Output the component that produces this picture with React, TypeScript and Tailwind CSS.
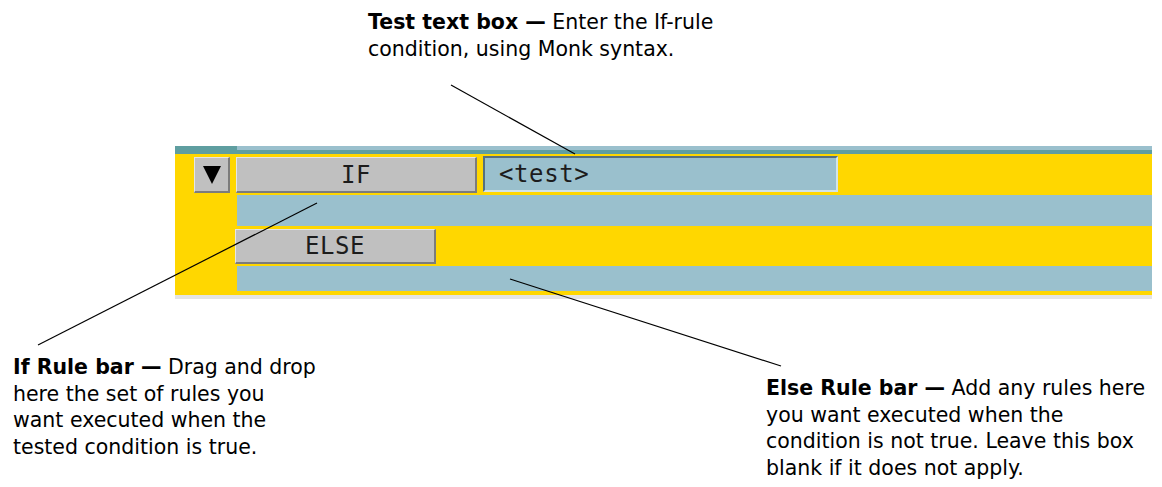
import { ReactNode } from "react";

const SANS = "font-['DejaVu_Sans','Open_Sans',sans-serif]";
const MONO = "font-['DejaVu_Sans_Mono','Liberation_Mono',monospace]";

function Callout({ title, lines, className }: { title: string; lines: ReactNode[]; className?: string }) {
  return (
    <div className={`${SANS} text-[20.5px] leading-[26.7px] text-black whitespace-nowrap ${className ?? ""}`}>
      <span className="font-bold">{title} —</span> {lines[0]}
      {lines.slice(1).map((l, i) => (
        <div key={i}>{l}</div>
      ))}
    </div>
  );
}

function BevelButton({ label, className }: { label: string; className: string }) {
  return (
    <div
      className={`${MONO} ${className} flex items-center justify-center bg-[#c0c0c0] border-t border-l border-t-[#e6e6e6] border-l-[#e6e6e6] border-r-2 border-b-2 border-r-[#7c7c7c] border-b-[#7c7c7c] text-[24px] tracking-[0.6px] text-[#1c1c1c]`}
    >
      {label}
    </div>
  );
}

export default function App() {
  return (
    <div className="relative w-[1162px] h-[487px] bg-white overflow-hidden">
      <Callout
        className="pl-[368px] pt-[9px] h-[61px]"
        title="Test text box"
        lines={["Enter the If-rule", "condition, using Monk syntax."]}
      />

      {/* rule panel */}
      <div className="ml-[175px] mt-[85px] w-[977px] flex flex-col">
        <div className="flex h-[8px]">
          <div className="w-[62px] bg-[#5f9ea0]" />
          <div className="flex-1 flex flex-col">
            <div className="h-[4px] bg-[#9ac0cd]" />
            <div className="h-[4px] bg-[#5f9ea0]" />
          </div>
        </div>
        <div className="bg-[#ffd700] flex flex-col">
          <div className="h-[41px] flex items-start pl-[19px] pt-[3px] gap-[6px]">
            <div className="w-[36px] h-[36px] bg-[#c0c0c0] border-t border-l border-t-[#e6e6e6] border-l-[#e6e6e6] border-r-2 border-b-2 border-r-[#7c7c7c] border-b-[#7c7c7c] flex items-center justify-center">
              <svg width="18" height="18" viewBox="0 0 18 18">
                <polygon points="0,0 18,0 9,18" fill="#000" />
              </svg>
            </div>
            <BevelButton label="IF" className="w-[241px] h-[36px]" />
            <div className={`${MONO} -mt-px w-[355px] h-[36px] bg-[#9ac0cd] border-2 border-t-[#56707c] border-l-[#56707c] border-r-[#d2e4ea] border-b-[#d2e4ea] flex items-center pl-[14px] text-[24px] tracking-[0.6px] text-[#1c1c1c]`}>
              &lt;test&gt;
            </div>
          </div>
          <div className="h-[31px] ml-[62px] bg-[#9ac0cd]" />
          <div className="h-[40px] pl-[60px] pt-[3px]">
            <BevelButton label="ELSE" className="w-[201px] h-[35px]" />
          </div>
          <div className="h-[25px] ml-[62px] bg-[#9ac0cd]" />
          <div className="h-[4px]" />
        </div>
        <div className="h-[4px] bg-[#e4e4e4]" />
      </div>

      <div className="flex items-start mt-[55px]">
        <Callout
          className="pl-[13px] w-[766px] shrink-0"
          title="If Rule bar"
          lines={["Drag and drop", "here the set of rules you", "want executed when the", "tested condition is true."]}
        />
        <Callout
          className="mt-[21px]"
          title="Else Rule bar"
          lines={["Add any rules here", "you want executed when the", "condition is not true. Leave this box", "blank if it does not apply."]}
        />
      </div>

      {/* leader lines */}
      <svg className="absolute inset-0 pointer-events-none" width="1162" height="487">
        <line x1="451" y1="85" x2="575" y2="154" stroke="#000" strokeWidth="1.2" />
        <line x1="317" y1="203" x2="38" y2="345" stroke="#000" strokeWidth="1.2" />
        <line x1="510" y1="279" x2="781" y2="366" stroke="#000" strokeWidth="1.2" />
      </svg>
    </div>
  );
}
